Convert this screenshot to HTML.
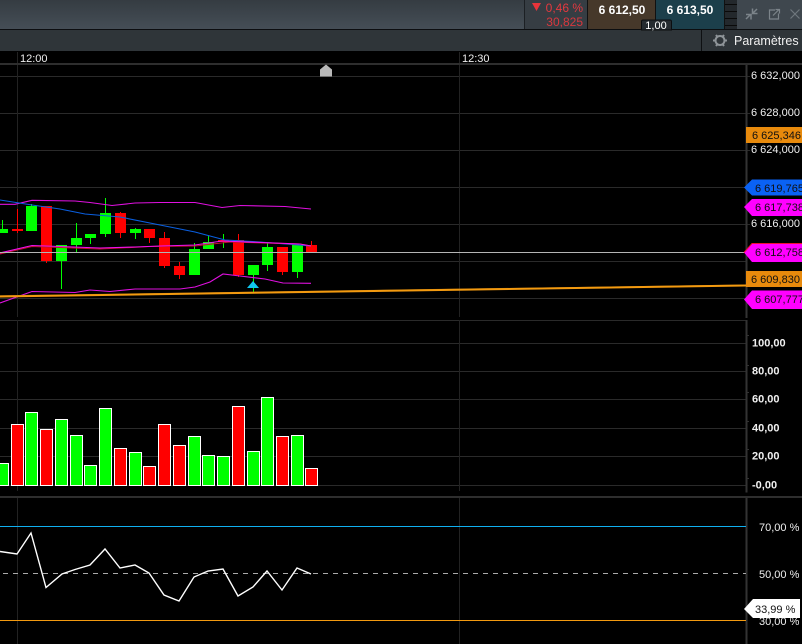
<!DOCTYPE html>
<html><head><meta charset="utf-8"><style>
html,body{margin:0;padding:0;background:#000}
#p{position:relative;width:802px;height:644px;overflow:hidden;background:#000;font-family:"Liberation Sans",sans-serif}
svg{position:absolute;left:0;top:0}
text{font-family:"Liberation Sans",sans-serif}
</style></head><body><div id="p">
<svg width="802" height="644" viewBox="0 0 802 644" xmlns="http://www.w3.org/2000/svg">
<defs><linearGradient id="h" x1="0" y1="0" x2="0" y2="1"><stop offset="0" stop-color="#353c42"/><stop offset="1" stop-color="#454e56"/></linearGradient></defs>
<!-- header -->
<rect x="0" y="0" width="802" height="29" fill="url(#h)"/>
<rect x="0" y="29" width="802" height="1" fill="#0c0e10"/>
<rect x="0" y="30" width="802" height="21" fill="#2f3539"/>
<rect x="524" y="0" width="1" height="29" fill="#1c2024"/>
<rect x="525" y="0" width="62" height="29" fill="#363d43"/>
<rect x="587" y="0" width="68" height="29" fill="#46382a"/>
<rect x="587" y="0" width="1" height="29" fill="#111"/>
<rect x="655" y="0" width="1" height="29" fill="#111"/>
<rect x="656" y="0" width="68" height="29" fill="#1c3f4b"/>
<rect x="724" y="0" width="1" height="29" fill="#111"/>
<rect x="725" y="0" width="12" height="29" fill="#23282c"/>
<path d="M725 4.500h12M725 11.500h12M725 18.500h12M725 25.500h12" stroke="#0a0a0a" stroke-width="1"/>
<rect x="737" y="0" width="65" height="29" fill="#3f474e"/>
<path d="M532 3h9l-4.500 8z" fill="#e8343a"/>
<text x="583" y="12" font-size="12" fill="#e4393f" text-anchor="end">0,46 %</text>
<text x="583" y="26" font-size="12" fill="#d8383e" text-anchor="end">30,825</text>
<text x="622" y="14" font-size="12" font-weight="bold" fill="#fff" text-anchor="middle">6 612,50</text>
<text x="690" y="14" font-size="12" font-weight="bold" fill="#fff" text-anchor="middle">6 613,50</text>
<path d="M641.500 30v-8.500a1.500 1.500 0 0 1 1.500-1.500h27a1.500 1.500 0 0 1 1.500 1.500v8.500z" fill="#252b30" stroke="#0c0e10"/>
<text x="656" y="29" font-size="11" fill="#fff" text-anchor="middle">1,00</text>
<!-- window icons -->
<path d="M746 19l4-4M746 14.500l5 0 0 5M757 9l-4 4M752.500 8.500v5h5" fill="none" stroke="#7c848a" stroke-width="1.500"/>
<path d="M775 10h-5.500v9h9v-5.500M773 15.500l6-6M775.500 9.500h4v4" fill="none" stroke="#7c848a" stroke-width="1.200"/>
<path d="M790.500 9.500l9 9M799.500 9.500l-9 9" fill="none" stroke="#6f777d" stroke-width="1.200"/>
<rect x="701" y="30" width="1" height="21" fill="#0e1012"/>
<!-- gear -->
<path d="M715.500 40.500a4.500 4.500 0 1 0 9 0a4.500 4.500 0 1 0-9 0z" fill="none" stroke="#8e9498" stroke-width="2"/>
<path d="M713 40.500h2.500M724.500 40.500h2.500M716 35l1.500 2M724 35l-1.500 2M716 46l1.500-2M724 46l-1.500-2" stroke="#8e9498" stroke-width="2"/>
<text x="734" y="45" font-size="12.500" fill="#f0f0f0">Paramètres</text>
<!-- grid -->
<g stroke="#2a2a2a" stroke-width="1">
<path d="M0 76.500H750M0 113.500H750M0 150.500H750M0 187.500H746M0 224.500H750M0 261.500H746M0 298.500H746M0 343.500H746M0 371.500H746M0 399.500H746M0 428.500H746M0 456.500H746M0 485.500H746M0 320.500H746"/>
<path stroke="#222" d="M17.500 52V317M17.500 320V491M17.500 498V644M459.500 52V317M459.500 320V491M459.500 498V644"/>
<path d="M746 335.500h3M746 365.500h3M746 392.500h3M746 421.500h3M746 449.500h3M746 478.500h3" stroke="#333"/>
</g>
<path d="M0 64H802M0 497H802" stroke="#2e2e2e" stroke-width="2"/>
<path d="M746.500 65V318M746.500 320V492.500M746.500 498V644" stroke="#333" stroke-width="2"/>
<text x="20" y="62" font-size="11" fill="#eee">12:00</text>
<text x="462" y="62" font-size="11" fill="#eee">12:30</text>
<path d="M320 76.500v-7l6-5 6 5v7z" fill="#b8b8b8"/>
<!-- wicks -->
<g stroke-width="1" fill="none">
<path stroke="#0f0" d="M2.500 220V229M31.500 204V206M61.500 245V289M76.500 223V252M90.500 238V244M105.500 198V237M135.500 228V239M194.500 243V249M208.500 236V248M223.500 234V248M253.500 275V292M267.500 243V271M297.500 245V278"/>
<path stroke="#f00" d="M17.500 209V233M46.500 261V263M120.500 212V238M149.500 238V243M164.500 232V268M179.500 262V279M238.500 234V277M282.500 272V275M311.500 241V252"/>
</g>
<!-- bodies -->
<g fill="#0f0">
<rect x="0" y="229" width="8" height="4"/><rect x="26" y="206" width="11" height="25"/><rect x="56" y="245" width="11" height="16"/><rect x="71" y="238" width="11" height="7"/><rect x="85" y="234" width="11" height="4"/><rect x="100" y="213" width="11" height="21"/><rect x="130" y="229" width="11" height="4"/><rect x="189" y="249" width="11" height="26"/><rect x="203" y="242" width="11" height="7"/><rect x="248" y="265" width="11" height="10"/><rect x="262" y="247" width="11" height="18"/><rect x="292" y="245" width="11" height="27"/>
</g>
<g fill="#f00">
<rect x="12" y="229" width="11" height="2"/><rect x="41" y="206" width="11" height="55"/><rect x="115" y="213" width="11" height="20"/><rect x="144" y="229" width="11" height="9"/><rect x="159" y="238" width="11" height="28"/><rect x="174" y="266" width="11" height="9"/><rect x="218" y="240" width="11" height="2"/><rect x="233" y="240" width="11" height="35"/><rect x="277" y="247" width="11" height="25"/><rect x="306" y="245" width="11" height="7"/>
</g>
<!-- indicator lines -->
<g fill="none" stroke-width="1.100">
<path stroke="#e010e0" d="M0 204.300L15 204.300L32 200.300L75 201L90 202.500L112 205.500L135 203L160 202.500L195 202.500L222 207.500L240 205.500L285 206.500L311 209"/>
<path stroke="#0a5fe0" d="M0 200L32 205L60 209L85 214L120 217L160 225L195 232L225 240L260 242L311 246"/>
<path stroke="#c0102a" d="M0 254L32 246.500L60 247.500L100 249L150 246.500L195 246L230 242L300 244L311 246"/>
<path stroke="#f010f0" d="M0 253L32 245.500L60 246.500L100 248L135 247L160 246L195 245L222 241L300 244L311 246"/>
<path stroke="#e010e0" d="M0 303L32 291.500L75 292.500L90 290L110 291.500L135 289L180 289L195 287L210 282L223 274L240 276L265 279L283 283L311 283.300"/>
</g>
<path d="M0 252.500H746" stroke="#b4b4b4" stroke-width="1"/>
<path d="M0 295.800L746 285" stroke="#8a5a10" stroke-width="1" fill="none"/>
<path d="M0 296.500L746 285.500" stroke="#f39a10" stroke-width="2" fill="none"/>
<path d="M247 288l6-7 6 7z" fill="#10c8f0"/>
<!-- axis labels -->
<g font-size="11" fill="#f0f0f0">
<text x="751" y="79">6 632,000</text>
<text x="751" y="116">6 628,000</text>
<text x="751" y="153">6 624,000</text>
<text x="751" y="227">6 616,000</text>
</g>
<g font-size="11" font-weight="bold" fill="#f0f0f0">
<text x="752" y="346.500">100,00</text><text x="752" y="374.500">80,00</text><text x="752" y="402.500">60,00</text><text x="752" y="431.500">40,00</text><text x="752" y="459.500">20,00</text><text x="752" y="488.500">-0,00</text>
</g>
<g font-size="11" fill="#f0f0f0">
<text x="759" y="531">70,00 %</text><text x="759" y="578">50,00 %</text><text x="759" y="625">30,00 %</text>
</g>
<!-- tags -->
<rect x="746" y="127" width="56" height="16" fill="#e88a0c"/>
<text x="752" y="139" font-size="11" fill="#111">6 625,346</text>
<path d="M744 187.500l8-8H802V195.500H752z" fill="#0a62f4"/>
<text x="755" y="192" font-size="11" fill="#111">6 619,765</text>
<path d="M744 207l8-8H802V216H752z" fill="#ff00ff"/>
<text x="755" y="211" font-size="11" fill="#111">6 617,738</text>
<path d="M744 252.500l8-9H802V262H752z" fill="#ff00ff"/>
<path d="M744 252.500l8-9H802" fill="none" stroke="#f01030" stroke-width="1"/>
<text x="755" y="256" font-size="11" fill="#111">6 612,758</text>
<rect x="746" y="271" width="56" height="16" fill="#e88a0c"/>
<text x="751" y="283" font-size="11" fill="#111">6 609,830</text>
<path d="M744 299.500l8-9H802V309H752z" fill="#ff00ff"/>
<text x="755" y="303" font-size="11" fill="#111">6 607,777</text>
<path d="M744 609l9-10H800V618H753z" fill="#fff"/>
<text x="755" y="613" font-size="11" fill="#111">33,99 %</text>
<!-- volume -->
<g stroke="#fff" stroke-width="1">
<rect x="-2.500" y="463.500" width="11" height="22" fill="#0f0"/>
<rect x="11.500" y="424.500" width="12" height="61" fill="#f00"/>
<rect x="25.500" y="412.500" width="12" height="73" fill="#0f0"/>
<rect x="40.500" y="429.500" width="12" height="56" fill="#f00"/>
<rect x="55.500" y="419.500" width="12" height="66" fill="#0f0"/>
<rect x="70.500" y="435.500" width="12" height="50" fill="#0f0"/>
<rect x="84.500" y="465.500" width="12" height="20" fill="#0f0"/>
<rect x="99.500" y="408.500" width="12" height="77" fill="#0f0"/>
<rect x="114.500" y="448.500" width="12" height="37" fill="#f00"/>
<rect x="129.500" y="452.500" width="12" height="33" fill="#0f0"/>
<rect x="143.500" y="466.500" width="12" height="19" fill="#f00"/>
<rect x="158.500" y="424.500" width="12" height="61" fill="#f00"/>
<rect x="173.500" y="445.500" width="12" height="40" fill="#f00"/>
<rect x="188.500" y="436.500" width="12" height="49" fill="#0f0"/>
<rect x="202.500" y="455.500" width="12" height="30" fill="#0f0"/>
<rect x="217.500" y="456.500" width="12" height="29" fill="#0f0"/>
<rect x="232.500" y="406.500" width="12" height="79" fill="#f00"/>
<rect x="247.500" y="451.500" width="12" height="34" fill="#0f0"/>
<rect x="261.500" y="397.500" width="12" height="88" fill="#0f0"/>
<rect x="276.500" y="436.500" width="12" height="49" fill="#f00"/>
<rect x="291.500" y="435.500" width="12" height="50" fill="#0f0"/>
<rect x="305.500" y="468.500" width="12" height="17" fill="#f00"/>
</g>
<!-- RSI -->
<path d="M0 526.500H746" stroke="#10b0f0" stroke-width="1"/>
<path d="M0 620.500H746" stroke="#f39a10" stroke-width="1"/>
<path d="M3 573.500H746" stroke="#aaa" stroke-width="1" stroke-dasharray="5 5" fill="none"/>
<polyline fill="none" stroke="#fff" stroke-width="1.400" points="0,551.500 17,554 31,533 46,587.500 62,574 75,569.500 90,565 105,549 120,568 135,565 149,573 164,595 179,601 194,577 208,571 223,569 238,596 253,587 267,571 282,590 297,568 311,574"/>
</svg>
</div></body></html>
